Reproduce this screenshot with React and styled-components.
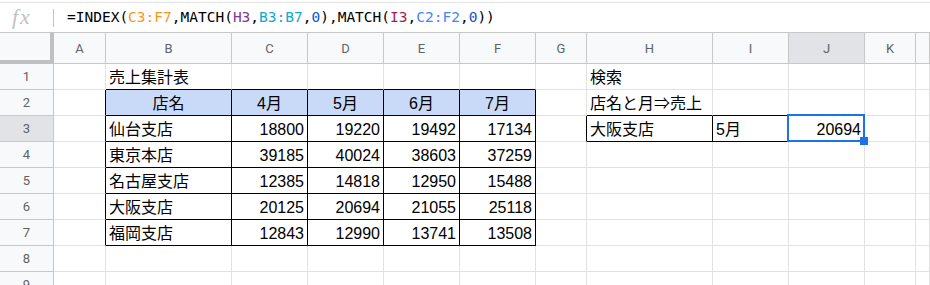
import React from "react";
import styled, { createGlobalStyle, css } from "styled-components";

const Global = createGlobalStyle`
  html, body { margin: 0; padding: 0; background: #fff; }
  body { overflow: hidden; }
  * { box-sizing: border-box; }
`;

const Page = styled.div`
  width: 930px;
  height: 285px;
  overflow: hidden;
  padding-top: 2px;
  background: #fff;
`;

const FormulaBar = styled.div`
  height: 31px;
  border-top: 1px solid #e3e3e3;
  border-bottom: 1px solid #c7c7c7;
  display: flex;
  align-items: center;
`;

const FxIcon = styled.span`
  width: 53px;
  padding-left: 12px;
  font-family: "Liberation Serif", "DejaVu Serif", serif;
  font-style: italic;
  font-size: 22px;
  letter-spacing: 2px;
  color: #c2c2c2;
  line-height: 1;
  margin-top: -2px;
`;

const Separator = styled.span`
  width: 1px;
  height: 18px;
  background: #c4c4c4;
`;

const Formula = styled.div`
  margin-left: 13px;
  font-family: "DejaVu Sans Mono", "Liberation Mono", monospace;
  font-size: 14.5px;
  color: #000;
  white-space: pre;
  line-height: 1;
`;

const Ref = styled.span`
  color: ${(p) => p.$c};
`;

const Grid = styled.div`
  display: grid;
  grid-template-columns: 54px 52px 126px 76px 76px 76px 76px 51px 126px 76px 76px 51px 1fr;
  grid-template-rows: 31px repeat(9, 26px);
`;

const Corner = styled.div`
  background: #f8f9fa;
  border-right: 4px solid #c0c0c0;
  border-bottom: 4px solid #c0c0c0;
`;

const headerText = css`
  font-family: Roboto, "Liberation Sans", sans-serif;
  font-size: 13px;
  color: #5f6368;
  display: flex;
  align-items: center;
  justify-content: center;
`;

const ColHeader = styled.div`
  ${headerText};
  background: ${(p) => (p.$active ? "#e1e3e6" : "#f8f9fa")};
  border-right: 1px solid #c7c7c7;
  border-bottom: 1px solid #c7c7c7;
`;

const RowHeader = styled.div`
  ${headerText};
  background: ${(p) => (p.$active ? "#e1e3e6" : "#f8f9fa")};
  border-right: 1px solid #c7c7c7;
  border-bottom: 1px solid #c7c7c7;
`;

const Cell = styled.div`
  position: relative;
  z-index: ${(p) => (p.$selected ? 2 : "auto")};
  display: flex;
  align-items: flex-end;
  justify-content: ${(p) =>
    p.$align === "right" ? "flex-end" : p.$align === "center" ? "center" : "flex-start"};
  padding: 0 3px 2px 3px;
  background: ${(p) => p.$bg || "#fff"};
  border-right: 1px solid ${(p) => (p.$br ? "#000" : "#e2e2e3")};
  border-bottom: 1px solid ${(p) => (p.$bb ? "#000" : "#e2e2e3")};
  font-family: "Liberation Sans", "Noto Sans CJK JP", sans-serif;
  font-size: 16px;
  line-height: 18px;
  color: #000;
  white-space: nowrap;
`;

const Selection = styled.div`
  position: absolute;
  left: -2px;
  top: -2px;
  right: -1px;
  bottom: -1px;
  border: 2px solid #1a73e8;
  pointer-events: none;
`;

const Handle = styled.div`
  position: absolute;
  right: -5px;
  bottom: -5px;
  width: 8px;
  height: 8px;
  background: #1a73e8;
`;

const COLS = ["A", "B", "C", "D", "E", "F", "G", "H", "I", "J", "K", ""];

const content = {
  1: { 2: ["売上集計表"], 8: ["検索"] },
  2: {
    2: ["店名", "center"],
    3: ["4月", "center"],
    4: ["5月", "center"],
    5: ["6月", "center"],
    6: ["7月", "center"],
    8: ["店名と月⇒売上"],
  },
  3: { 8: ["大阪支店"], 9: ["5月"], 10: ["20694", "right"] },
};

const table = [
  ["仙台支店", 18800, 19220, 19492, 17134],
  ["東京本店", 39185, 40024, 38603, 37259],
  ["名古屋支店", 12385, 14818, 12950, 15488],
  ["大阪支店", 20125, 20694, 21055, 25118],
  ["福岡支店", 12843, 12990, 13741, 13508],
];
table.forEach((row, i) => {
  const r = i + 3;
  content[r] = content[r] || {};
  row.forEach((v, j) => {
    content[r][j + 2] = typeof v === "number" ? [String(v), "right"] : [v];
  });
});

function blackRight(r, c) {
  if (r >= 2 && r <= 7 && c >= 1 && c <= 6) return true;
  if (r === 3 && c >= 7 && c <= 9) return true;
  return false;
}
function blackBottom(r, c) {
  if (c >= 2 && c <= 6 && r >= 1 && r <= 7) return true;
  if (c >= 8 && c <= 9 && r >= 2 && r <= 3) return true;
  return false;
}

export default function App() {
  const cells = [];
  cells.push(<Corner key="corner" />);
  COLS.forEach((l, i) => {
    cells.push(
      <ColHeader key={"h" + i} $active={i + 1 === 10}>
        {l}
      </ColHeader>
    );
  });
  for (let r = 1; r <= 9; r++) {
    cells.push(
      <RowHeader key={"r" + r} $active={r === 3}>
        {r}
      </RowHeader>
    );
    for (let c = 1; c <= 12; c++) {
      const item = content[r] && content[r][c];
      const selected = r === 3 && c === 10;
      cells.push(
        <Cell
          key={r + "-" + c}
          $selected={selected}
          $align={item ? item[1] : undefined}
          $bg={r === 2 && c >= 2 && c <= 6 ? "#c9daf8" : undefined}
          $br={blackRight(r, c)}
          $bb={blackBottom(r, c)}
        >
          {item ? item[0] : null}
          {selected && (
            <Selection>
              <Handle />
            </Selection>
          )}
        </Cell>
      );
    }
  }

  return (
    <Page>
      <Global />
      <FormulaBar>
        <FxIcon>fx</FxIcon>
        <Separator />
        <Formula>
          =INDEX(<Ref $c="#f7981d">C3:F7</Ref>,MATCH(<Ref $c="#7e3794">H3</Ref>,
          <Ref $c="#11a9cc">B3:B7</Ref>,<Ref $c="#1155cc">0</Ref>),MATCH(
          <Ref $c="#a61d4c">I3</Ref>,<Ref $c="#4285f4">C2:F2</Ref>,
          <Ref $c="#1155cc">0</Ref>))
        </Formula>
      </FormulaBar>
      <Grid>{cells}</Grid>
    </Page>
  );
}
